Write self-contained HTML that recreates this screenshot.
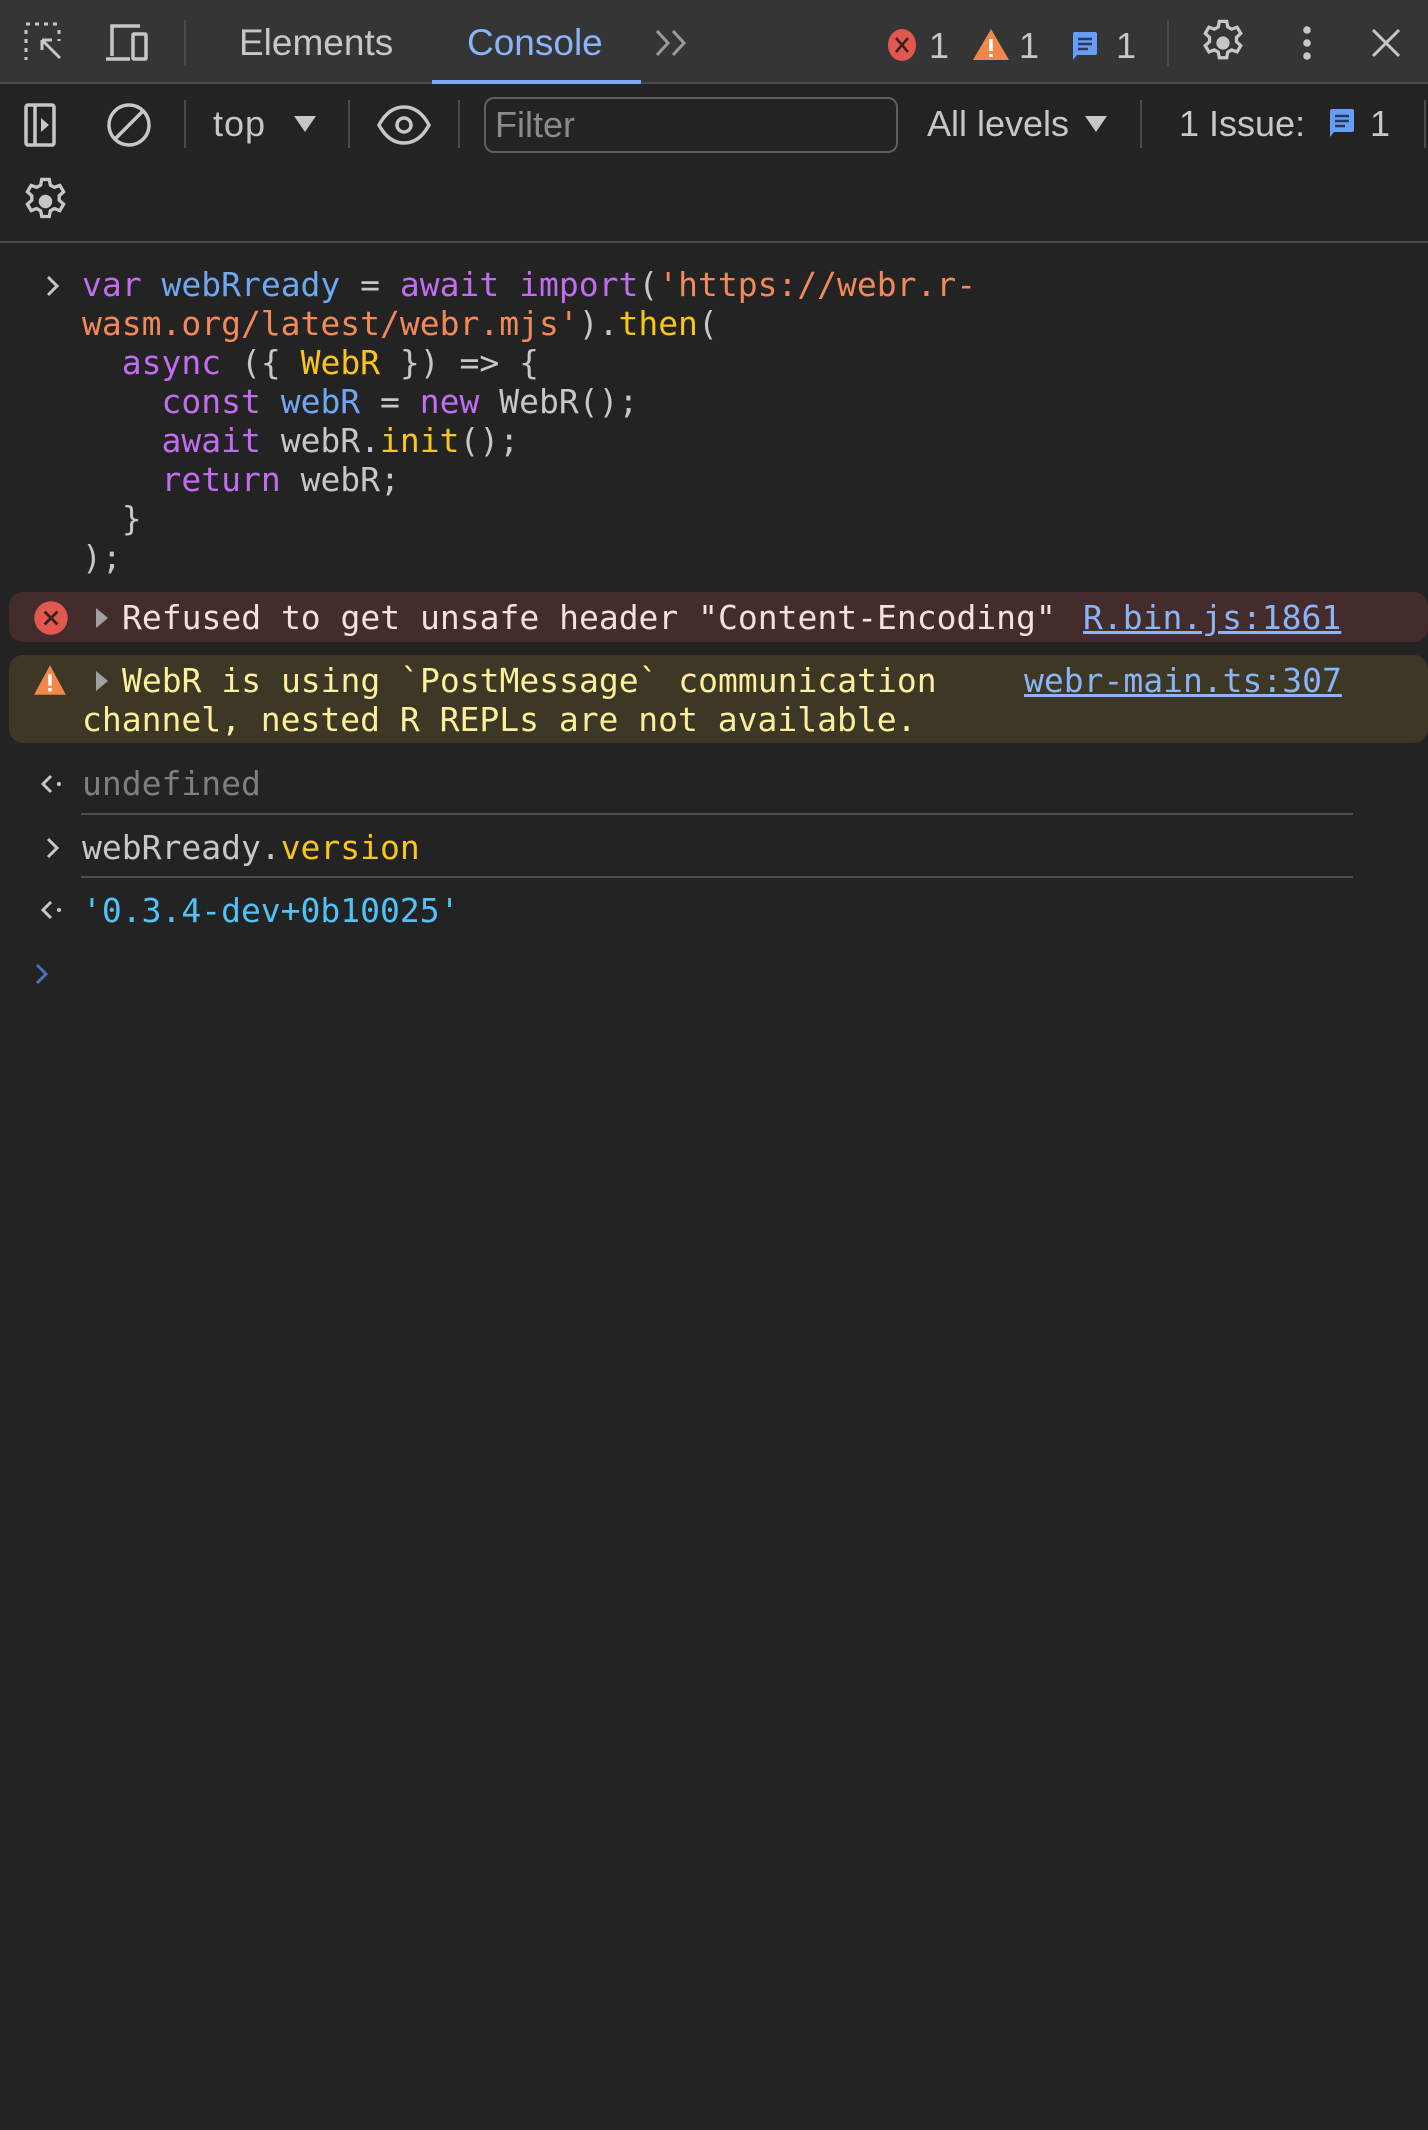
<!DOCTYPE html>
<html><head><meta charset="utf-8"><style>
*{margin:0;padding:0;box-sizing:border-box}
body{width:1428px;height:2130px;background:#232323;position:relative;overflow:hidden;font-family:"Liberation Sans",sans-serif;color:#c7c7c7}
.a{position:absolute}
.mono{font-family:"DejaVu Sans Mono","Liberation Mono",monospace;font-size:33px;line-height:39px;white-space:pre}
.sep{position:absolute;width:2px;background:#4a4a4a}
.k{color:#c26cf1}.v{color:#6ea7f5}.s{color:#f18959}.y{color:#f9c51b}.w{color:#c7c7c7}
a{color:#8ab4f8;text-decoration:underline}
.t{font-size:36px}
</style></head><body>
<div class="a" style="left:0;top:0;width:1428px;height:83px;background:#353535"></div>
<div class="a" style="left:0;top:82px;width:1428px;height:2px;background:#4a4a4a"></div>
<div class="a" style="left:432px;top:80px;width:209px;height:4px;background:#7cacf8"></div>
<svg class="a" style="left:24px;top:22px" width="42" height="42" viewBox="0 0 42 42" fill="none" stroke="#c7c7c7" stroke-width="3"><path d="M2 2h4M11 2h4M20 2h4M29 2h4M2 8v4M2 17v4M2 26v4M2 35v3M35 8v4M35 17v2"/><path d="M18 18l18 18M18 18h10M18 18v10"/></svg>
<svg class="a" style="left:106px;top:22px" width="50" height="42" viewBox="0 0 50 42" fill="none" stroke="#c7c7c7" stroke-width="3.5"><path d="M6 34V4h28"/><path d="M0 37h24"/><rect x="27" y="12" width="13" height="25" rx="1"/></svg>
<div class="sep" style="left:184px;top:20px;height:46px"></div>
<div class="a" style="left:239px;top:22px;font-size:37px;color:#c7c7c7">Elements</div>
<div class="a" style="left:467px;top:22px;font-size:37px;color:#8ab4f8">Console</div>
<svg class="a" style="left:654px;top:28px" width="36" height="30" viewBox="0 0 36 30" fill="none" stroke="#9a9a9a" stroke-width="3"><path d="M3 3l11 12L3 27M19 3l11 12-11 12"/></svg>
<svg class="a" style="left:886px;top:28px" width="32" height="34" viewBox="0 0 32 34"><ellipse cx="16" cy="17" rx="14" ry="16" fill="#e0584e"/><path d="M10 10l12 14M22 10L10 24" stroke="#3a1f1f" stroke-width="2.5"/></svg>
<div class="a" style="left:929px;top:25px;font-size:36px">1</div>
<svg class="a" style="left:971px;top:27px" width="40" height="34" viewBox="0 0 40 34"><path d="M20 2L38 33H2z" fill="#f0884b"/><path d="M20 12v12M20 27v3" stroke="#fff" stroke-width="3.5"/></svg>
<div class="a" style="left:1019px;top:25px;font-size:36px">1</div>
<svg class="a" style="left:1071px;top:31px" width="32" height="32" viewBox="0 0 32 32"><path d="M2 3a2 2 0 012-2h20a2 2 0 012 2v19a2 2 0 01-2 2H6l-4 5z" fill="#669df6"/><path d="M7 8h14M7 13h14M7 18h10" stroke="#2b3a55" stroke-width="2.5"/></svg>
<div class="a" style="left:1116px;top:25px;font-size:36px">1</div>
<div class="sep" style="left:1167px;top:20px;height:46px"></div>
<svg class="a" style="left:1197px;top:17px" width="52" height="52" viewBox="0 0 24 24" fill="none" stroke="#c7c7c7" stroke-width="1.5"><path d="M10.3 2h3.4l.5 2.6 1.8 1 2.5-.9 1.7 2.9-2 1.8v2l2 1.8-1.7 2.9-2.5-.9-1.8 1-.5 2.6h-3.4l-.5-2.6-1.8-1-2.5.9-1.7-2.9 2-1.8v-2l-2-1.8 1.7-2.9 2.5.9 1.8-1z"/><circle cx="12" cy="12" r="2.3" fill="#c7c7c7"/></svg>
<svg class="a" style="left:1299px;top:24px" width="16" height="40" viewBox="0 0 16 40" fill="#c7c7c7"><circle cx="8" cy="6" r="3.8"/><circle cx="8" cy="19" r="3.8"/><circle cx="8" cy="32" r="3.8"/></svg>
<svg class="a" style="left:1370px;top:27px" width="32" height="32" viewBox="0 0 32 32" stroke="#c7c7c7" stroke-width="3"><path d="M3 3l26 26M29 3L3 29"/></svg>

<svg class="a" style="left:24px;top:103px" width="42" height="44" viewBox="0 0 42 44" fill="none" stroke="#c7c7c7" stroke-width="3.5"><rect x="2" y="2" width="28" height="40" rx="2"/><path d="M11 2v40"/><path d="M17 15l8 7-8 7z" fill="#c7c7c7" stroke="none"/></svg>
<svg class="a" style="left:106px;top:102px" width="46" height="46" viewBox="0 0 46 46" fill="none" stroke="#c7c7c7" stroke-width="3.5"><circle cx="23" cy="23" r="20"/><path d="M37 9L9 37"/></svg>
<div class="sep" style="left:184px;top:100px;height:48px"></div>
<div class="a t" style="left:213px;top:103px;letter-spacing:1px">top</div>
<svg class="a" style="left:292px;top:114px" width="26" height="20"><path d="M2 2h22L13 18z" fill="#c7c7c7"/></svg>
<div class="sep" style="left:348px;top:100px;height:48px"></div>
<svg class="a" style="left:376px;top:104px" width="56" height="42" viewBox="0 0 56 42" fill="none" stroke="#c7c7c7" stroke-width="3.5"><path d="M3 21C10 8 19 3 28 3s18 5 25 18c-7 13-16 18-25 18S10 34 3 21z"/><circle cx="28" cy="21" r="7"/></svg>
<div class="sep" style="left:458px;top:100px;height:48px"></div>
<div class="a" style="left:484px;top:97px;width:414px;height:56px;border:2.5px solid #5f5f5f;border-radius:10px"></div>
<div class="a t" style="left:495px;top:104px;color:#8a8a8a">Filter</div>
<div class="a t" style="left:927px;top:103px">All levels</div>
<svg class="a" style="left:1083px;top:114px" width="26" height="20"><path d="M2 2h22L13 18z" fill="#c7c7c7"/></svg>
<div class="sep" style="left:1140px;top:100px;height:48px"></div>
<div class="a t" style="left:1179px;top:103px">1 Issue:</div>
<svg class="a" style="left:1328px;top:108px" width="32" height="32" viewBox="0 0 32 32"><path d="M2 3a2 2 0 012-2h20a2 2 0 012 2v19a2 2 0 01-2 2H6l-4 5z" fill="#669df6"/><path d="M7 8h14M7 13h14M7 18h10" stroke="#2b3a55" stroke-width="2.5"/></svg>
<div class="a t" style="left:1370px;top:103px">1</div>
<div class="sep" style="left:1424px;top:100px;height:48px"></div>
<svg class="a" style="left:19px;top:175px" width="53" height="53" viewBox="0 0 24 24" fill="none" stroke="#c7c7c7" stroke-width="1.5"><path d="M10.3 2h3.4l.5 2.6 1.8 1 2.5-.9 1.7 2.9-2 1.8v2l2 1.8-1.7 2.9-2.5-.9-1.8 1-.5 2.6h-3.4l-.5-2.6-1.8-1-2.5.9-1.7-2.9 2-1.8v-2l-2-1.8 1.7-2.9 2.5.9 1.8-1z"/><circle cx="12" cy="12" r="2.3" fill="#c7c7c7"/></svg>
<div class="a" style="left:0;top:241px;width:1428px;height:2px;background:#4a4a4a"></div>

<svg class="a" style="left:44px;top:274px" width="18" height="24" viewBox="0 0 18 24" fill="none" stroke="#c7c7c7" stroke-width="3"><path d="M4 3l9 9-9 9"/></svg>
<div class="a mono" style="left:82px;top:265px"><span class="k">var</span> <span class="v">webRready</span> <span class="w">=</span> <span class="k">await</span> <span class="k">import</span><span class="w">(</span><span class="s">'https://webr.r-</span>
<span class="s">wasm.org/latest/webr.mjs'</span><span class="w">).</span><span class="y">then</span><span class="w">(</span>
<span class="w">  </span><span class="k">async</span><span class="w"> ({ </span><span class="y">WebR</span><span class="w"> }) =&gt; {</span>
<span class="w">    </span><span class="k">const</span> <span class="v">webR</span><span class="w"> = </span><span class="k">new</span><span class="w"> WebR();</span>
<span class="w">    </span><span class="k">await</span><span class="w"> webR.</span><span class="y">init</span><span class="w">();</span>
<span class="w">    </span><span class="k">return</span><span class="w"> webR;</span>
<span class="w">  }</span>
<span class="w">);</span></div>

<div class="a" style="left:9px;top:592px;width:1419px;height:50px;background:#452c2c;border-radius:14px"></div>
<svg class="a" style="left:33px;top:600px" width="36" height="36" viewBox="0 0 28 28"><circle cx="14" cy="14" r="13" fill="#e0584e"/><path d="M9 9l10 10M19 9L9 19" stroke="#3a1f1f" stroke-width="2.2"/></svg>
<svg class="a" style="left:94px;top:606px" width="16" height="24"><path d="M2 2l12 10L2 22z" fill="#a0a0a0"/></svg>
<div class="a mono" style="left:122px;top:598px;color:#f9dede">Refused to get unsafe header "Content-Encoding"</div>
<div class="a mono" style="left:1083px;top:598px"><a>R.bin.js:1861</a></div>

<div class="a" style="left:9px;top:655px;width:1419px;height:88px;background:#3d3825;border-radius:14px"></div>
<svg class="a" style="left:31px;top:663px" width="38" height="34" viewBox="0 0 32 30"><path d="M16 2L30 28H2z" fill="#f0884b"/><path d="M16 10v10M16 22v3" stroke="#fff" stroke-width="3"/></svg>
<svg class="a" style="left:94px;top:669px" width="16" height="24"><path d="M2 2l12 10L2 22z" fill="#a0a0a0"/></svg>
<div class="a mono" style="left:122px;top:661px;color:#fdf09c">WebR is using `PostMessage` communication</div>
<div class="a mono" style="left:82px;top:700px;color:#fdf09c">channel, nested R REPLs are not available.</div>
<div class="a mono" style="left:1024px;top:661px"><a>webr-main.ts:307</a></div>

<svg class="a" style="left:40px;top:773px" width="26" height="22" viewBox="0 0 26 22" fill="none" stroke="#c7c7c7" stroke-width="3"><path d="M11 3L3 11l8 8"/><circle cx="19" cy="11" r="2" fill="#c7c7c7" stroke="none"/></svg>
<div class="a mono" style="left:82px;top:764px;color:#7f7f7f">undefined</div>
<div class="a" style="left:81px;top:813px;width:1272px;height:2px;background:#4e4e4e"></div>
<svg class="a" style="left:44px;top:836px" width="18" height="24" viewBox="0 0 18 24" fill="none" stroke="#c7c7c7" stroke-width="3"><path d="M4 3l9 9-9 9"/></svg>
<div class="a mono" style="left:82px;top:828px"><span class="w">webRready.</span><span class="y">version</span></div>
<div class="a" style="left:81px;top:876px;width:1272px;height:2px;background:#4e4e4e"></div>
<svg class="a" style="left:40px;top:899px" width="26" height="22" viewBox="0 0 26 22" fill="none" stroke="#c7c7c7" stroke-width="3"><path d="M11 3L3 11l8 8"/><circle cx="19" cy="11" r="2" fill="#c7c7c7" stroke="none"/></svg>
<div class="a mono" style="left:82px;top:891px;color:#4fc3f7">'0.3.4-dev+0b10025'</div>
<svg class="a" style="left:33px;top:962px" width="18" height="24" viewBox="0 0 18 24" fill="none" stroke="#4a73b5" stroke-width="3"><path d="M4 3l9 9-9 9"/></svg>
</body></html>
